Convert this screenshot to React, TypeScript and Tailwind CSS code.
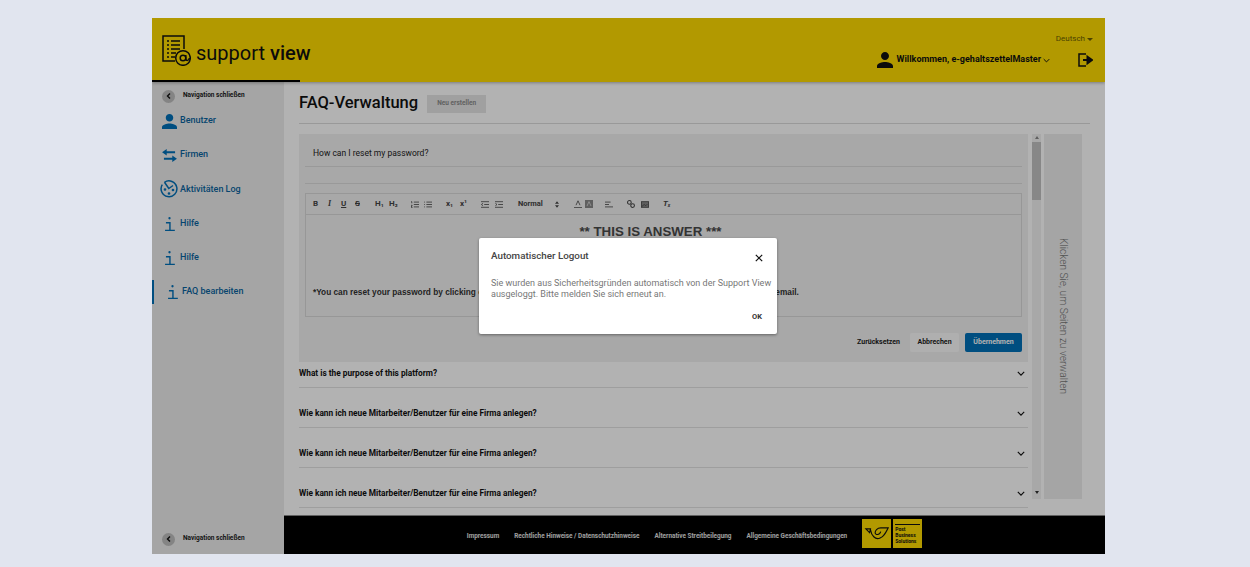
import React from 'react';

const plex = "font-['Roboto','Liberation_Sans',sans-serif]";

function Person({ className }: { className: string }) {
  return (
    <svg viewBox="4 4 16 16" className={className} fill="currentColor">
      <path d="M12 12c2.21 0 4-1.79 4-4s-1.79-4-4-4-4 1.79-4 4 1.79 4 4 4zm0 2c-2.67 0-8 1.34-8 4v2h16v-2c0-2.66-5.33-4-8-4z" />
    </svg>
  );
}

function InfoIcon() {
  return (
    <svg viewBox="0 0 14 18" className="w-[13px] h-[16px]" fill="none" stroke="#0070b8" strokeWidth="1.6">
      <circle cx="7" cy="2.500" r="1.300" fill="#0070b8" stroke="none" />
      <path d="M3 7.500h4.500V16M2 16.200h11" />
    </svg>
  );
}

function NavClose() {
  return (
    <div className="flex items-center h-[14px] pl-[10px] gap-[8px]">
      <div className="w-[13px] h-[13px] rounded-full bg-[#bdbdbd] flex items-center justify-center">
        <svg viewBox="0 0 8 8" className="w-2 h-2" fill="none" stroke="#111" strokeWidth="1.400">
          <path d="M5 1.500 2.500 4 5 6.500" />
        </svg>
      </div>
      <span className="text-[6.500px] font-bold text-[#1c1c1c]">Navigation schließen</span>
    </div>
  );
}

function SideItem({ icon, label, active }: { icon: React.ReactNode; label: string; active?: boolean }) {
  return (
    <div className={`flex items-center h-[24px] mb-[10.200px] ${active ? 'border-l-[2px] border-[#0070b8] pl-[8px]' : 'pl-[7px]'}`}>
      <div className="w-[20px] flex justify-center">{icon}</div>
      <span className={`text-[#0a649f] text-[9px] font-medium ${active ? 'ml-[0px]' : 'ml-[1px]'}`}>{label}</span>
    </div>
  );
}

function Sidebar() {
  return (
    <aside className="w-[132px] bg-[#ececec] flex flex-col pt-[7px] pb-[8px] shrink-0">
      <NavClose />
      <div className="mt-[6px]">
        <SideItem label="Benutzer" icon={<Person className="w-[15px] h-[15px] text-[#0070b8]" />} />
        <SideItem
          label="Firmen"
          icon={
            <svg viewBox="0 0 16 14" className="w-[15px] h-[13px]" fill="#0070b8">
              <path d="M5 0 0 3.500 5 7V4.700h9V2.400H5zM11 7v2.300H2v2.300h9V14l5-3.500z" />
            </svg>
          }
        />
        <SideItem
          label="Aktivitäten Log"
          icon={
            <svg viewBox="0 0 18 18" className="w-[18px] h-[18px]" fill="none" stroke="#0070b8" strokeWidth="1.500">
              <path d="M4.500 2.300A7.900 7.900 0 1 1 2.300 4.600" />
              <path d="M4.500 2.300 8.800 8.500 13 5.500" />
              <circle cx="5" cy="9.500" r=".6" fill="#0070b8" />
              <circle cx="9" cy="13.500" r=".6" fill="#0070b8" />
              <circle cx="13" cy="10" r=".6" fill="#0070b8" />
            </svg>
          }
        />
        <SideItem label="Hilfe" icon={<InfoIcon />} />
        <SideItem label="Hilfe" icon={<InfoIcon />} />
        <SideItem label="FAQ bearbeiten" icon={<InfoIcon />} active />
      </div>
      <div className="mt-auto">
        <NavClose />
      </div>
    </aside>
  );
}

function ToolGlyph({ children, className }: { children: React.ReactNode; className?: string }) {
  return <span className={`text-[8px] font-bold text-[#444] ${className ?? ''}`}>{children}</span>;
}

function ListIcon({ dots }: { dots?: boolean }) {
  return (
    <svg viewBox="0 0 10 8" className="w-[8px] h-[7px]" fill="none" stroke="#444" strokeWidth="1">
      <path d={dots ? 'M0 1h1M3 1h7M0 4h1M3 4h7M0 7h1M3 7h7' : 'M0 .5h1v2M0 5h1.500L0 7.500h2M3.500 1H10M3.500 4H10M3.500 7H10'} />
    </svg>
  );
}

function IndentIcon({ out }: { out?: boolean }) {
  return (
    <svg viewBox="0 0 10 8" className="w-[8px] h-[7px]" fill="none" stroke="#444" strokeWidth="1">
      <path d="M0 .5h10M4 4h6M0 7.500h10" />
      <path d={out ? 'M2.500 2.500 .5 4l2 1.500' : 'M.5 2.500l2 1.500-2 1.500'} />
    </svg>
  );
}

function Toolbar() {
  return (
    <div className="h-[21px] border border-[#d8d8d8] border-b-0 bg-[#f1f1f1] flex items-center text-[#444] pl-[7px]">
      <ToolGlyph className="w-[15px]">B</ToolGlyph>
      <ToolGlyph className="w-[13px] italic font-['Liberation_Serif',serif]">I</ToolGlyph>
      <ToolGlyph className="w-[14px] underline">U</ToolGlyph>
      <ToolGlyph className="w-[20px] line-through">S</ToolGlyph>
      <ToolGlyph className="w-[14px]">H₁</ToolGlyph>
      <ToolGlyph className="w-[22px]">H₂</ToolGlyph>
      <div className="w-[13px]"><ListIcon /></div>
      <div className="w-[22px]"><ListIcon dots /></div>
      <ToolGlyph className="w-[14px]">x₁</ToolGlyph>
      <ToolGlyph className="w-[21px]">x¹</ToolGlyph>
      <div className="w-[14px]"><IndentIcon out /></div>
      <div className="w-[23px]"><IndentIcon /></div>
      <span className="text-[7.500px] font-bold text-[#444] w-[37px]">Normal</span>
      <div className="w-[19px]">
        <svg viewBox="0 0 6 10" className="w-[4px] h-[7px]" fill="#444">
          <path d="M3 0 6 4H0zM3 10 0 6h6z" />
        </svg>
      </div>
      <svg viewBox="0 0 10 10" className="w-[8px] h-[8px] mr-[3px]" fill="none" stroke="#444">
        <path d="M2.500 6.500 5 1l2.500 5.500M0 9.500h10" />
      </svg>
      <svg viewBox="0 0 10 10" className="w-[8px] h-[8px] mr-[12px]" fill="#888">
        <rect width="10" height="10" />
        <path d="M2.500 7.500 5 2l2.500 5.500" stroke="#ddd" fill="none" />
      </svg>
      <svg viewBox="0 0 10 8" className="w-[8px] h-[7px] mr-[14px]" fill="none" stroke="#444">
        <path d="M0 1h7M0 4h5M0 7h10" />
      </svg>
      <svg viewBox="0 0 10 10" className="w-[8px] h-[8px] mr-[6px]" fill="none" stroke="#444" strokeWidth="1.300">
        <circle cx="3" cy="3" r="2.300" />
        <circle cx="7" cy="7" r="2.300" />
      </svg>
      <svg viewBox="0 0 10 8" className="w-[8px] h-[7px] mr-[14px]" fill="#888" stroke="#444">
        <rect x=".5" y=".5" width="9" height="7" />
        <path d="M1 6.500 4 4l2 1.500L8 3.500" fill="none" />
      </svg>
      <span className="text-[8px] font-bold italic text-[#444] leading-none">T<sub className="text-[5px]">x</sub></span>
    </div>
  );
}

function FaqRow({ label, first }: { label: string; first?: boolean }) {
  return (
    <div className={`flex items-center justify-between border-b border-[#e2e2e2] pr-[3px] ${first ? 'h-[26px] pb-[3px]' : 'h-[40px] pt-[13px] pb-[2px]'}`}>
      <span className="text-[8.300px] font-bold text-[#111]">{label}</span>
      <svg viewBox="0 0 10 6" className="w-[8px] h-[5px]" fill="none" stroke="#111" strokeWidth="1.400">
        <path d="M1 1l4 4 4-4" />
      </svg>
    </div>
  );
}

function PageContent() {
  return (
    <div className="flex-1 min-h-0 overflow-hidden px-[15px]">
      <div className="flex items-center h-[42px] pt-[2px] border-b border-[#dcdcdc]">
        <h1 className="text-[16.500px] font-medium text-[#111]">FAQ-Verwaltung</h1>
        <button className="ml-[9px] w-[59px] h-[18px] bg-[#e6e6e6] text-[6.500px] font-bold text-[#8c8c8c]">Neu erstellen</button>
      </div>
      <div className="flex mt-[10px] h-[365px]">
        <div className="w-[729px] shrink-0">
          <div className="bg-[#f1f1f1] h-[228px] px-[6px]">
            <div className="h-[33px] border-b border-[#dcdcdc] flex items-center pl-[8px] pt-[6px] text-[8.500px] text-[#222]">
              How can I reset my password?
            </div>
            <div className="h-[17px] border-b border-[#dcdcdc]" />
            <div className="mt-[9px]">
              <Toolbar />
              <div className="h-[103px] border border-[#d8d8d8] font-['Liberation_Sans',sans-serif]">
                <p className="text-[13.300px] font-bold text-[#4a4a4a] text-center pr-[26px] mt-[8px] leading-[18px]">** THIS IS ANSWER ***</p>
                <p className="text-[8.280px] font-bold text-[#333] pl-[7px] mt-[46px] whitespace-nowrap">
                  *You can reset your password by clicking on "Forgot Password" on the login page and following the link sent to your email.
                </p>
              </div>
            </div>
            <div className="flex items-center justify-end mt-[16px] text-[7px] font-bold">
              <span className="text-[#222] mr-[10px]">Zurücksetzen</span>
              <button className="w-[49px] h-[19px] bg-[#fbfbfb] text-[#222] rounded-[2px]">Abbrechen</button>
              <button className="w-[57px] h-[19px] ml-[6px] bg-[#0070b8] text-white rounded-[2px]">Übernehmen</button>
            </div>
          </div>
          <FaqRow first label="What is the purpose of this platform?" />
          <FaqRow label="Wie kann ich neue Mitarbeiter/Benutzer für eine Firma anlegen?" />
          <FaqRow label="Wie kann ich neue Mitarbeiter/Benutzer für eine Firma anlegen?" />
          <FaqRow label="Wie kann ich neue Mitarbeiter/Benutzer für eine Firma anlegen?" />
        </div>
        <div className="w-[9px] ml-[4px] bg-[#f1f1f1] flex flex-col items-center justify-between h-[365px] py-[2px] shrink-0">
          <div className="w-full flex flex-col items-center">
            <span className="w-0 h-0 border-x-[2px] border-x-transparent border-b-[3px] border-b-[#888]" />
            <div className="w-full h-[58px] bg-[#c2c2c2] mt-[3px]" />
          </div>
          <span className="w-0 h-0 border-x-[2px] border-x-transparent border-t-[3px] border-t-[#333] mb-[3px]" />
        </div>
        <div className="w-[38px] ml-[3px] bg-[#ececec] flex items-center justify-center shrink-0">
          <span className="[writing-mode:vertical-rl] text-[10.200px] font-light text-[#777] whitespace-nowrap">Klicken Sie, um Seiten zu verwalten</span>
        </div>
      </div>
    </div>
  );
}

function Footer() {
  return (
    <footer className="h-[39px] bg-black flex items-center justify-center shrink-0 border-t border-[#8a8a8a]">
      <div className="flex items-center text-[6.400px] font-bold text-[#e2e2e2] gap-[15px] pt-[3px]">
        <span>Impressum</span>
        <span>Rechtliche Hinweise / Datenschutzhinweise</span>
        <span>Alternative Streitbeilegung</span>
        <span>Allgemeine Geschäftsbedingungen</span>
        <div className="flex gap-[2px] -mt-[6px]">
          <div className="w-[29px] h-[29px] bg-[#ffdc00] flex items-center justify-center">
            <svg viewBox="0 0 28 20" className="w-[26px] h-[19px]" fill="none" stroke="#111" strokeWidth="1.200">
              <path d="M2 5h5l-1 4zM7 6c1 6 5 11 10 9 4-1 6-5 9-11h-8c-4 0-6 3-6 5 0 3 5 3 6-1" />
            </svg>
          </div>
          <div className="w-[29px] h-[29px] bg-[#ffdc00] px-[2px] pt-[5px]">
            <div className="border-t border-[#111] pt-[1px] text-[5px] leading-[6px] font-bold text-[#111]">
              Post<br />Business<br />Solutions
            </div>
          </div>
        </div>
      </div>
    </footer>
  );
}

function Header() {
  return (
    <header className="h-[64px] bg-[#ffdc00] relative flex items-center justify-between pl-[10px] pr-[12px] shrink-0 shadow-[0_1px_3px_rgba(0,0,0,0.3)] z-10">
      <div className="flex items-center gap-[5px]">
        <svg viewBox="0 0 29 31" className="w-[29px] h-[31px]" fill="none" stroke="#111" strokeWidth="1.500">
          <path d="M22 14V1H1v25h12" />
          <path d="M5 6h2M9 6h9M5 10h2M9 10h9M5 14h2M9 14h9M5 18h2M9 18h5M5 22h2M9 22h4" />
          <circle cx="21" cy="23" r="7.300" />
          <circle cx="21" cy="23" r="2.800" />
          <path d="M23.800 20v4c0 2 3.500 2 3.500-1" />
        </svg>
        <span className="text-[20px] text-[#111] leading-none mt-[6px]">support <span className="font-medium">view</span></span>
      </div>
      <div className="flex flex-col items-end h-full pt-[15px]">
        <div className="text-[8px] text-[#6d5f00] flex items-center gap-[2px]">
          Deutsch
          <span className="w-0 h-0 border-x-[3px] border-x-transparent border-t-[3px] border-t-[#6d5f00]" />
        </div>
        <div className="flex items-center mt-[7px]">
          <Person className="w-[16px] h-[16px] text-[#111]" />
          <span className="text-[9px] font-bold text-[#111] ml-[4px]">Willkommen, e-gehaltszettelMaster</span>
          <svg viewBox="0 0 10 6" className="w-[7px] h-[5px] ml-[2px]" fill="none" stroke="#111" strokeWidth="1.400">
            <path d="M1 1l4 4 4-4" />
          </svg>
          <svg viewBox="0 0 16 16" className="w-[16px] h-[16px] ml-[27px]" fill="none" stroke="#111" strokeWidth="1.500">
            <path d="M9 2H2v12h7" />
            <path d="M6 8h5M10.500 4.800 15 8l-4.500 3.200z" fill="#111" strokeWidth="2" />
          </svg>
        </div>
      </div>
      <div className="absolute left-0 bottom-0 w-[148px] h-[2px] bg-black" />
    </header>
  );
}

function LogoutDialog() {
  return (
    <div className="absolute inset-0 z-20 bg-black/30 flex items-center justify-center pr-[1px]">
      <div className="w-[298px] h-[96px] bg-white rounded-[2px] shadow-[0_1px_3px_rgba(0,0,0,0.4)] px-[12px] pt-[11px]">
        <div className="flex items-center justify-between pr-[1px]">
          <h2 className="text-[9.800px] font-medium text-[#444]">Automatischer Logout</h2>
          <svg viewBox="0 0 10 10" className="w-[8px] h-[8px] mt-[4px] mr-[1px]" fill="none" stroke="#111" strokeWidth="1.500">
            <path d="M1 1l8 8M9 1 1 9" />
          </svg>
        </div>
        <p className="mt-[14px] -mr-[8px] text-[9px] leading-[11px] text-[#777]">
          Sie wurden aus Sicherheitsgründen automatisch von der Support View ausgeloggt. Bitte melden Sie sich erneut an.
        </p>
        <div className="flex justify-end mt-[11px] pr-[3px] text-[7.500px] font-bold text-[#333]">OK</div>
      </div>
    </div>
  );
}

export default function App() {
  return (
    <div className={`min-h-screen bg-[#e1e5ef] pt-[18px] pl-[152px] ${plex}`}>
      <div className="relative w-[953px] h-[536px] flex flex-col bg-white overflow-hidden">
        <Header />
        <div className="flex flex-1 min-h-0">
          <Sidebar />
          <main className="flex-1 min-w-0 flex flex-col">
            <PageContent />
            <Footer />
          </main>
        </div>
        <LogoutDialog />
      </div>
    </div>
  );
}
